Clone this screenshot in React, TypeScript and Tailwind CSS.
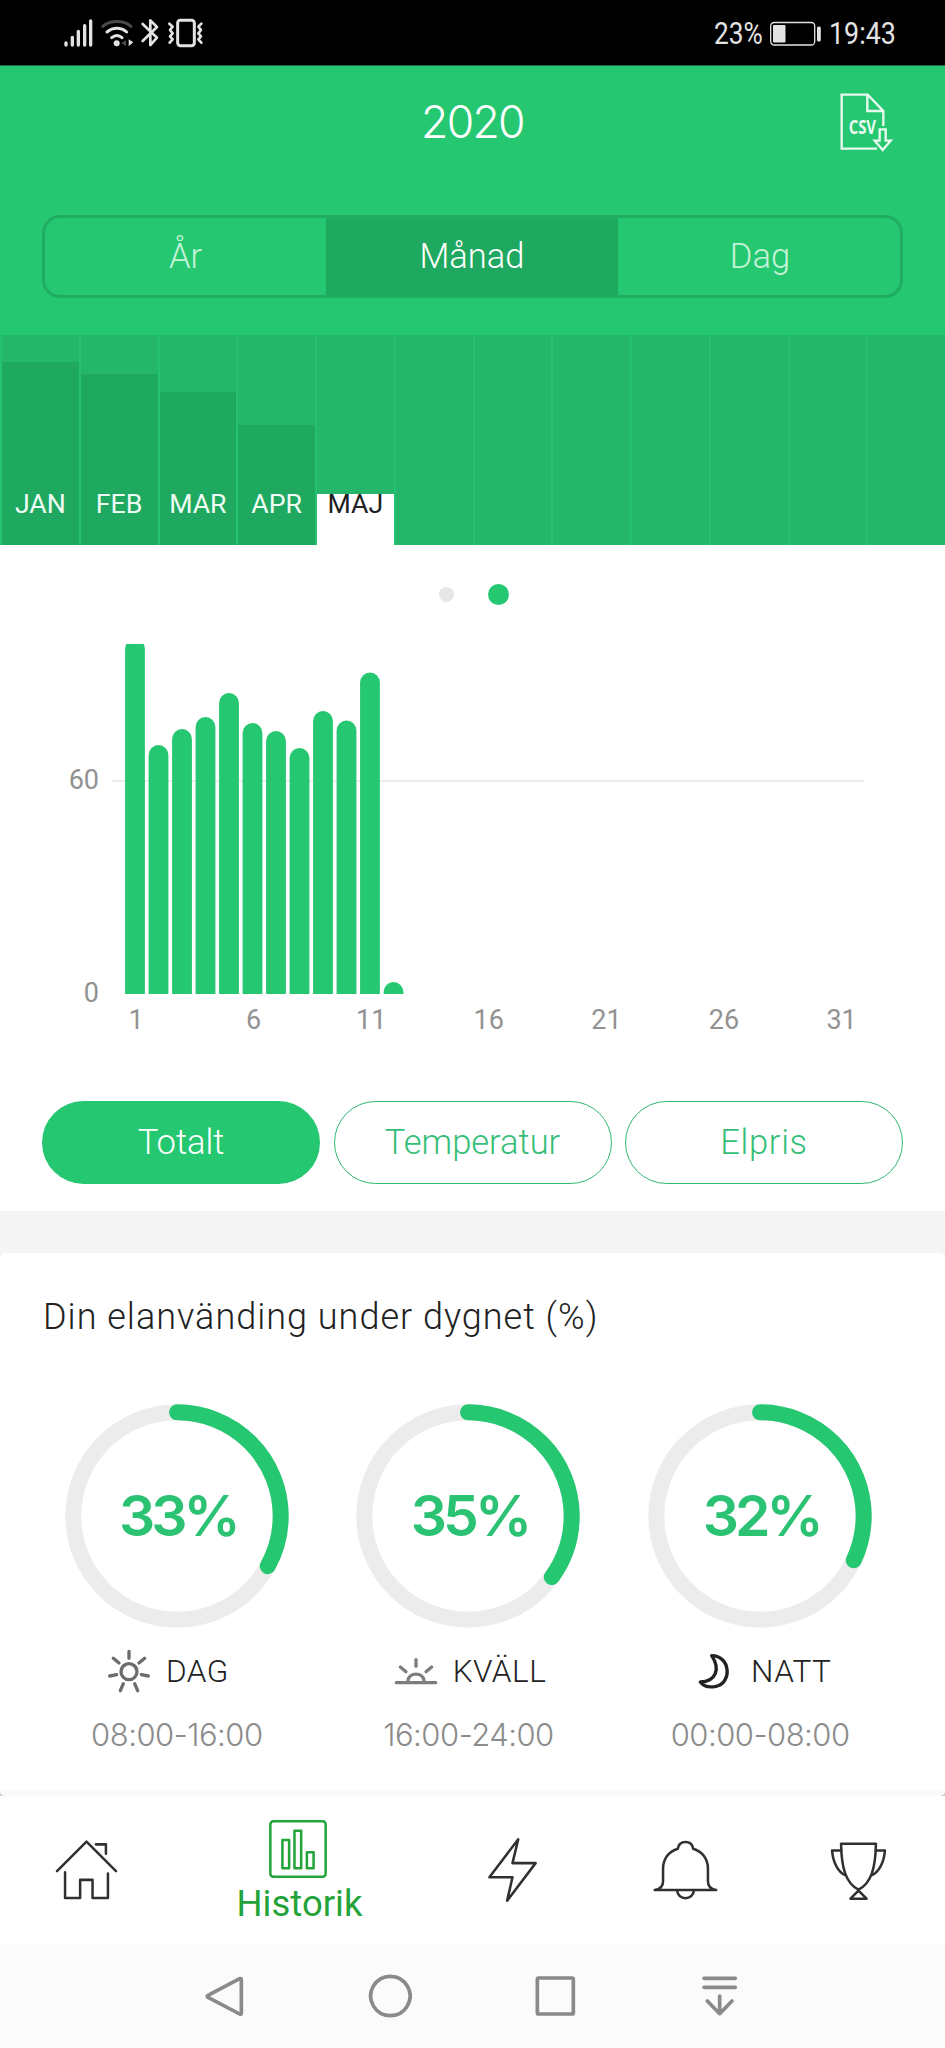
import type { ReactNode } from "react";

type Month = { label: string; height: number; active?: boolean };

const months: Month[] = [
  { label: "JAN", height: 183 },
  { label: "FEB", height: 171 },
  { label: "MAR", height: 153 },
  { label: "APR", height: 120 },
  { label: "MAJ", height: 51, active: true },
  { label: "", height: 0 },
  { label: "", height: 0 },
  { label: "", height: 0 },
  { label: "", height: 0 },
  { label: "", height: 0 },
  { label: "", height: 0 },
  { label: "", height: 0 },
];

// Bar heights in chart pixels, one per day
const days = [355, 249, 265, 277, 301, 271, 263, 246, 283, 273.5, 321.5, 12];
const dayTicks = [1, 6, 11, 16, 21, 26, 31];

function StatusBar() {
  return (
    <div className="flex h-[66px] items-start justify-between border-b border-[#1c6b42] bg-black pl-[63px] pr-[50px]">
      <svg className="mt-[17px] h-8 w-[142px]" viewBox="0 0 426 96" fill="none" strokeLinecap="round">
        <g stroke="#e3e3e3" strokeWidth="10">
          <path d="M9 78v6M28 61v23M46 43v41M65 26v58M83 12v72" />
        </g>
        <g strokeWidth="9">
          <path d="M119 28c24-19 62-19 85 0" stroke="#4a4a4a" />
          <path d="M132 45c18-15 42-15 59 0M146 62c10-8 22-8 31 0" stroke="#e3e3e3" />
        </g>
        <circle cx="161" cy="79" r="9" fill="#e3e3e3" />
        <path d="M189 70v18l-14-10z" fill="#4a4a4a" />
        <path d="M197 67v21l14-12z" fill="#e3e3e3" />
        <path
          d="M239 21l43 41-20 22V10l20 20-43 42"
          stroke="#e3e3e3"
          strokeWidth="8"
          strokeLinejoin="round"
        />
        <rect x="344" y="10" width="50" height="76" rx="8" stroke="#e3e3e3" strokeWidth="9" />
        <path
          d="M319 20l10 9-8 10 8 10-8 9 8 9-9 10M415 20l-9 9 8 10-8 10 8 9-8 9 9 10"
          stroke="#e3e3e3"
          strokeWidth="8"
          strokeLinejoin="round"
        />
      </svg>
      <div className="mt-[18px] flex h-8 items-center text-[30.5px] leading-8 text-[#e3e3e3]">
        <span className="w-[49px] origin-left scale-x-[0.86]">23%</span>
        <svg className="ml-[6px] h-[26px] w-[54px]" viewBox="0 0 54 26" fill="none">
          <rect x="1.7" y="1.5" width="44" height="22.5" rx="3.5" stroke="#e3e3e3" strokeWidth="1.3" />
          <rect x="4" y="4" width="12.5" height="17.5" rx="1" fill="#e3e3e3" />
          <rect x="48" y="5.5" width="3.8" height="15" rx="1.5" fill="#e3e3e3" />
        </svg>
        <span className="ml-[6px] w-[66px] origin-left scale-x-[0.88]">19:43</span>
      </div>
    </div>
  );
}

function CsvIcon() {
  return (
    <svg className="h-[60px] w-[55px]" viewBox="0 0 165 180" fill="none" stroke="#e9fbf0" strokeWidth="7">
      <path d="M133 102V57L86 8H8v162h106M85 8v49h48" />
      <path d="M122 112h18v34h15l-24 28-24-28h15z" />
      <text
        x="29"
        y="125"
        textLength="82"
        lengthAdjust="spacingAndGlyphs"
        fill="#e9fbf0"
        stroke="none"
        fontSize="60"
        fontWeight="700"
        fontFamily="Open Sans, sans-serif"
      >
        CSV
      </text>
    </svg>
  );
}

function Header() {
  return (
    <header className="bg-[#25c771]">
      <div className="grid h-[112px] grid-cols-3 items-center pr-[51px] pl-[51px]">
        <span />
        <h1 className="text-center font-[Inter] text-[44.5px] font-light leading-none tracking-[-1.7px] text-white">2020</h1>
        <div className="flex justify-end">
          <CsvIcon />
        </div>
      </div>
      <div className="mx-[42px] mt-[37px] grid h-[83px] grid-cols-[281px_292px_282px] overflow-hidden rounded-[18px] border-[3px] border-[#1fad63] text-[34.5px] font-light">
        <button type="button" className="text-[#c6f3d8]">År</button>
        <button type="button" className="bg-[#1fa860] text-white">Månad</button>
        <button type="button" className="pl-[2px] text-[#c6f3d8]">Dag</button>
      </div>
      <div className="mt-[37px] grid h-[210px] grid-cols-12 bg-[#24b66a]">
        {months.map((month, index) => (
          <div key={index} className="flex flex-col justify-end border-l-2 border-[#26c16f]">
            {month.label ? (
              <div
                className={
                  month.active
                    ? "flex items-end justify-center bg-white pb-[24px] text-[26.7px] leading-[34px] text-[#212121]"
                    : "flex items-end justify-center bg-[#1fa860] pb-[24px] text-[26.7px] leading-[34px] text-[#effcf4]"
                }
                style={{ height: month.height }}
              >
                {month.label}
              </div>
            ) : null}
          </div>
        ))}
      </div>
    </header>
  );
}

function UsageChart() {
  return (
    <svg className="block h-[397px] w-[945px] overflow-hidden" viewBox="0 0 945 397">
      <rect x="112" y="136" width="752" height="2" fill="#ececec" />
      {days.map((height, index) => {
        const x = 125.1 + index * 23.5;
        return (
          <path
            key={index}
            d={`M${x} 350V${350 - height + 10}a9.9 10 0 0 1 19.8 0V350z`}
            fill="#25c771"
          />
        );
      })}
      <g fill="#929292" fontSize="27" fontFamily="Roboto, sans-serif">
        <text x="99" y="145" textAnchor="end">60</text>
        <text x="99" y="357.5" textAnchor="end">0</text>
        {dayTicks.map((tick, index) => (
          <text key={tick} x={136 + index * 117.6} y="384.5" textAnchor="middle">
            {tick}
          </text>
        ))}
      </g>
    </svg>
  );
}

function Ring({ percent }: { percent: number }) {
  const radius = 103.7;
  const length = 2 * Math.PI * radius;

  return (
    <div className="grid h-[224px] w-[224px] place-items-center">
      <svg className="col-start-1 row-start-1 h-[224px] w-[224px] -rotate-90" viewBox="0 0 224 224" fill="none" strokeWidth="16">
        <circle cx="112" cy="112" r={radius} stroke="#ececec" />
        <circle
          cx="112"
          cy="112"
          r={radius}
          stroke="#25c771"
          strokeLinecap="round"
          strokeDasharray={`${(length * percent) / 100} ${length}`}
        />
      </svg>
      <span className="col-start-1 row-start-1 pb-[1px] pl-[2px] font-[Inter] text-[57px] font-semibold leading-none tracking-[-4px] text-[#2bc274]">
        {percent}%
      </span>
    </div>
  );
}

function SunIcon() {
  return (
    <svg className="h-[44px] w-[44px]" viewBox="0 0 132 132" fill="none" stroke="#6c6c6c" strokeWidth="10" strokeLinecap="round">
      <circle cx="66" cy="68" r="24" />
      <path d="M66 7v21M19 28l17 14M113 28L96 42M8 81l21-4M124 81l-21-4M49 104l-9 21M83 104l9 21" />
    </svg>
  );
}

function SunsetIcon() {
  return (
    <svg className="h-[44px] w-[44px]" viewBox="0 0 132 132" fill="none" stroke="#7d7d7d" strokeWidth="10" strokeLinecap="round">
      <path d="M7 101h118M42 94c4-25 44-25 48 0M66 32v20M19 54l17 14M113 54L96 68" />
    </svg>
  );
}

function MoonIcon() {
  return (
    <svg className="h-[44px] w-[44px]" viewBox="0 0 132 132" fill="none" stroke="#222" strokeWidth="10" strokeLinejoin="round">
      <path d="M59 20C116 20 121 102 72 112C52 116 34 111 25 99C72 98 86 60 59 20z" />
    </svg>
  );
}

type Period = { percent: number; icon: ReactNode; name: string; hours: string; rowClass: string };

const periods: Period[] = [
  { percent: 33, icon: <SunIcon />, name: "DAG", hours: "08:00-16:00", rowClass: "pr-[18px]" },
  { percent: 35, icon: <SunsetIcon />, name: "KVÄLL", hours: "16:00-24:00", rowClass: "pl-[3px]" },
  { percent: 32, icon: <MoonIcon />, name: "NATT", hours: "00:00-08:00", rowClass: "pl-[3px]" },
];

function DailySplit() {
  return (
    <section className="bg-[#f5f5f5] pt-[42px]">
      <div className="bg-[#d0d0d0]">
        <div className="h-2 bg-[#f2f2f2]" />
        <div className="-mt-2 h-[543px] rounded-[5px] border-b-[6px] border-[#fafafa] bg-white pt-[43px]">
          <h2 className="pl-[43px] text-[36px] font-light leading-[42px] tracking-[1px] text-[#222]">
            Din elanvänding under dygnet (%)
          </h2>
          <div className="ml-[31px] mt-[66px] grid w-[875px] grid-cols-3">
            {periods.map((period) => (
              <div key={period.name} className="flex flex-col items-center">
                <Ring percent={period.percent} />
                <div className={`mt-[21px] flex h-[44px] items-center gap-[15px] ${period.rowClass}`}>
                  {period.icon}
                  <span className="pt-[1px] text-[31.5px] font-light leading-none tracking-[0.5px] text-[#222]">
                    {period.name}
                  </span>
                </div>
                <span className="mt-[22px] font-[Inter] text-[31px] font-light leading-10 tracking-[-0.5px] text-[#8c8c8c]">
                  {period.hours}
                </span>
              </div>
            ))}
          </div>
        </div>
      </div>
    </section>
  );
}

function NavIcon({ children }: { children: ReactNode }) {
  return (
    <svg
      className="h-[67px] w-[67px]"
      viewBox="0 0 200 200"
      fill="none"
      stroke="#303030"
      strokeWidth="7.5"
      strokeLinecap="round"
      strokeLinejoin="round"
    >
      {children}
    </svg>
  );
}

function TabBar() {
  return (
    <nav className="grid h-[148px] grid-cols-[173px_253px_173px_173px_173px] place-items-center bg-white">
      <NavIcon>
        <path d="M12 102L100 14l88 88M128 22h30v28" />
        <path d="M36 105v77h45v-54h37v54h46v-73" />
      </NavIcon>
      <div className="flex flex-col items-center pt-[3px] text-[#23a33a]">
        <svg className="mr-[3px] h-[58px] w-[58px]" viewBox="0 0 173 173" fill="none" stroke="currentColor" strokeWidth="7.5" strokeLinejoin="round">
          <rect x="4" y="4" width="165" height="165" rx="9" />
          <path d="M40 60h20v84H40zM76 32h20v112H76zM113 96h20v48h-20z" />
        </svg>
        <span className="mt-[6px] text-[36.5px] leading-[40px]">Historik</span>
      </div>
      <NavIcon>
        <path d="M117 7l-17 71h69L84 190l16-70H31z" />
      </NavIcon>
      <NavIcon>
        <path d="M8 158C24 156 33 147 33 132V94C33 66 50 43 77 35C79 22 87 15 100 15S121 22 123 35C150 43 167 66 167 94V132C167 147 176 156 192 158z" />
        <path d="M75 160c2 30 48 30 50 0" />
      </NavIcon>
      <NavIcon>
        <path d="M48 20h104C151 92 138 138 100 157C62 138 49 92 48 20z" />
        <path d="M48 40H21c3 38 19 65 39 74M152 40h27c-3 38-19 65-39 74M100 160l-24 24h48z" />
      </NavIcon>
    </nav>
  );
}

function SystemBar() {
  return (
    <div className="grid h-[104px] grid-cols-[165px_165px_165px_165px] place-items-center bg-[#fbfbfb] pl-[142px]">
      {[
        "M110 14L15 64q-5 3 0 6l95 50q5 2 5-3V17q0-5-5-3z",
        "M67 7a59 59 0 1 0 .1 0z",
        "M17 12h100q4 0 4 4v100q0 4-4 4H17q-4 0-4-4V16q0-4 4-4z",
        "M18 13h94M18 40h94M65 66v52M28 81l37 38 37-38",
      ].map((path) => (
        <svg
          key={path}
          className="h-[44px] w-[44px]"
          viewBox="0 0 132 132"
          fill="none"
          stroke="#8a8a8a"
          strokeWidth="11"
          strokeLinecap="round"
          strokeLinejoin="round"
        >
          <path d={path} />
        </svg>
      ))}
    </div>
  );
}

function App() {
  return (
    <div className="h-[2048px] w-[945px] overflow-hidden bg-white font-[Roboto,sans-serif]">
      <StatusBar />
      <Header />
      <div className="flex h-[99px] items-center justify-center gap-[34px] pl-[3px]">
        <span className="h-[15px] w-[15px] rounded-full bg-[#e6e6e6]" />
        <span className="h-[21px] w-[21px] rounded-full bg-[#25c771]" />
      </div>
      <UsageChart />
      <div className="mx-[42px] mb-[27px] mt-[60px] grid h-[83px] grid-cols-3 gap-[13.5px] text-[34.5px] font-light">
        <button type="button" className="rounded-full bg-[#25c771] pt-[1px] text-white">Totalt</button>
        <button type="button" className="rounded-full border-[1.5px] border-[#2fb770] pt-[1px] text-[#35be78]">Temperatur</button>
        <button type="button" className="rounded-full border-[1.5px] border-[#2fb770] pt-[1px] tracking-[0.7px] text-[#35be78]">Elpris</button>
      </div>
      <DailySplit />
      <TabBar />
      <SystemBar />
    </div>
  );
}

export default App;
